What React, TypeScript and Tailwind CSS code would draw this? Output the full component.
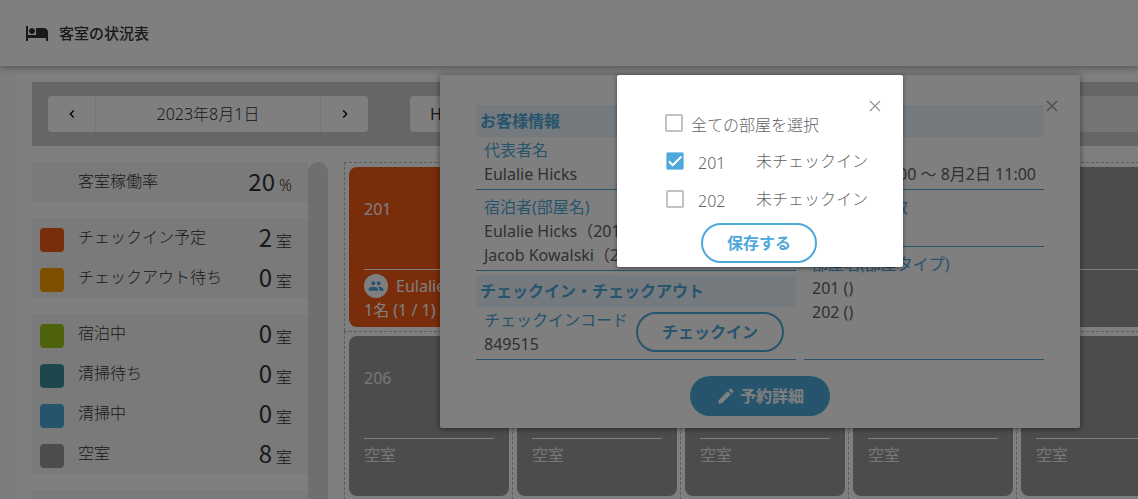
import { useState } from "react";
import {
  MdCheck,
  MdChevronLeft,
  MdChevronRight,
  MdEdit,
  MdHotel,
  MdPeople,
} from "react-icons/md";

type Stat = {
  label: string;
  value: number;
  unit: string;
  color?: string;
};

type Room = {
  no: string;
  guest?: string;
  people?: string;
};

const statGroups: Stat[][] = [
  [{ label: "客室稼働率", value: 20, unit: "%" }],
  [
    { label: "チェックイン予定", value: 2, unit: "室", color: "bg-[#f25a17]" },
    { label: "チェックアウト待ち", value: 0, unit: "室", color: "bg-[#ff9f00]" },
  ],
  [
    { label: "宿泊中", value: 0, unit: "室", color: "bg-[#9ac514]" },
    { label: "清掃待ち", value: 0, unit: "室", color: "bg-[#3c8c9b]" },
    { label: "清掃中", value: 0, unit: "室", color: "bg-[#4fa8db]" },
    { label: "空室", value: 8, unit: "室", color: "bg-[#999999]" },
  ],
];

const rooms: Room[] = [
  { no: "201", guest: "Eulalie Hicks", people: "1名 (1 / 1)" },
  { no: "202", guest: "Jacob Kowalski", people: "1名 (1 / 1)" },
  { no: "203" },
  { no: "204" },
  { no: "205" },
  { no: "206" },
  { no: "207" },
  { no: "208" },
  { no: "209" },
  { no: "210" },
];

function StatRow({ stat }: { stat: Stat }) {
  return (
    <div className="flex h-10 items-center pr-4 pb-0.5 pl-2">
      <span className={`mt-1.5 size-6 shrink-0 rounded ${stat.color ?? ""}`} />
      <span className="ml-[14px] flex-1">{stat.label}</span>
      <span>
        <span className="font-['Noto_Sans_CJK_JP',sans-serif] text-2xl leading-9 font-normal">
          {stat.value}
        </span>
        <span className="ml-1">{stat.unit}</span>
      </span>
    </div>
  );
}

function RoomCard({ room }: { room: Room }) {
  return (
    <div className="border-t border-l border-dashed border-[#b8b8b8] py-1 pr-[3px] pl-1">
      <div
        className={`h-40 overflow-hidden rounded-lg px-[15px] pt-[30px] ${
          room.guest ? "bg-[#f25a17] text-white" : "bg-[#999999] text-[#eeeeee]"
        }`}
      >
        <div>{room.no}</div>
        <div className="mt-12 border-t border-white pt-1 whitespace-nowrap">
          {room.guest ? (
            <>
              <div className="flex items-center gap-2">
                <span className="flex size-6 shrink-0 items-center justify-center rounded-full bg-white text-[#4fa8db]">
                  <MdPeople className="size-4" />
                </span>
                {room.guest}
              </div>
              <div>{room.people}</div>
            </>
          ) : (
            <div>空室</div>
          )}
        </div>
      </div>
    </div>
  );
}

function SectionTitle({ children }: { children: string }) {
  return (
    <h2 className="bg-[#e8f4fa] px-1 leading-8 font-bold text-[#4fa8db]">
      {children}
    </h2>
  );
}

function InfoItem({
  title,
  lines,
  className = "",
  action,
}: {
  title: string;
  lines: string[];
  className?: string;
  action?: React.ReactNode;
}) {
  return (
    <div
      className={`flex justify-between border-b border-[#4fa8db] px-2 pt-px pb-[3px] whitespace-nowrap ${className}`}
    >
      <dl className="flex-1">
        <dt className="text-left text-[#4fa8db]">{title}</dt>
        {lines.map((line, i) => (
          <dd key={i} className="min-h-6">
            {line}
          </dd>
        ))}
      </dl>
      {action}
    </div>
  );
}

function CloseButton({ className }: { className: string }) {
  return (
    <button aria-label="閉じる" className={`absolute top-[25px] ${className}`}>
      <svg viewBox="0 0 12 12" className="size-3 stroke-[#909399]" fill="none">
        <path d="M1 1l10 10M11 1L1 11" strokeWidth="1.2" />
      </svg>
    </button>
  );
}

function CheckBox({
  id,
  checked,
  onChange,
}: {
  id: string;
  checked: boolean;
  onChange: () => void;
}) {
  return (
    <span className="relative flex shrink-0">
      <input
        id={id}
        type="checkbox"
        checked={checked}
        onChange={onChange}
        className="size-[18px] appearance-none rounded-xs border-2 border-[#c2c2c2] checked:border-[#4fa8db] checked:bg-[#4fa8db]"
      />
      {checked && (
        <MdCheck
          className="pointer-events-none absolute inset-0 size-[18px] text-white"
          strokeWidth="1"
        />
      )}
    </span>
  );
}

export default function App() {
  const [selected, setSelected] = useState<string[]>(["201"]);
  const targets = ["201", "202"];
  const all = selected.length === targets.length;

  const toggle = (no: string) => {
    setSelected((prev) =>
      prev.includes(no) ? prev.filter((n) => n !== no) : [...prev, no]
    );
  };

  return (
    <div className="relative h-screen overflow-hidden bg-[#f8f8f8] font-['Noto_Sans','Noto_Sans_CJK_JP',sans-serif] text-base leading-6 font-light text-[#333333]">
      <header className="relative flex h-[66px] items-center gap-[10px] bg-white pl-[25px] shadow-[0_2px_6px_rgba(0,0,0,0.3)]">
        <MdHotel className="size-6" />
        <h1 className="text-[15px] font-medium">客室の状況表</h1>
      </header>

      <main className="mt-2 ml-4 bg-white pt-2 pl-4">
        <div className="flex h-16 items-center bg-[#cccccc] pl-4">
          <div className="flex h-9 w-80 rounded bg-white">
            <button
              aria-label="前の日"
              className="flex w-12 items-center justify-center border-r border-[#eeeeee] text-black"
            >
              <MdChevronLeft className="size-4" />
            </button>
            <button className="flex-1">2023年8月1日</button>
            <button
              aria-label="次の日"
              className="flex w-12 items-center justify-center border-l border-[#eeeeee] text-black"
            >
              <MdChevronRight className="size-4" />
            </button>
          </div>
          <button className="ml-[42px] h-9 w-80 rounded bg-white px-5 text-left font-normal">
            HOTEL
          </button>
          <button aria-label="更新" className="ml-4 h-9 flex-1 bg-[#e8eaed]" />
        </div>

        <div className="mt-4 flex gap-4">
          <aside className="flex shrink-0">
            <div className="flex w-[276px] flex-col gap-4">
              {statGroups.map((group, i) => (
                <div key={i} className="bg-[#f5f5f5]">
                  {group.map((stat) => (
                    <StatRow key={stat.label} stat={stat} />
                  ))}
                </div>
              ))}
              <div className="h-10 bg-[#f5f5f5]" />
            </div>
            <div className="w-5 rounded-full bg-[#dedede]" />
          </aside>
          <section className="grid min-w-0 flex-1 grid-cols-[repeat(5,168px)] content-start font-normal">
            {rooms.map((room) => (
              <RoomCard key={room.no} room={room} />
            ))}
          </section>
        </div>
      </main>

      {/* 予約情報ダイアログ */}
      <div className="absolute top-[75px] left-[440px] w-[640px] rounded-xs bg-white px-9 pt-[30px] pb-3 font-normal text-[#606266] shadow-[0_1px_6px_rgba(0,0,0,0.5)]">
        <CloseButton className="right-[22px]" />
        <div className="flex gap-2">
          <div className="flex w-80 flex-col">
            <SectionTitle>お客様情報</SectionTitle>
            <InfoItem title="代表者名" lines={["Eulalie Hicks"]} className="mb-1" />
            <InfoItem
              title="宿泊者(部屋名)"
              lines={["Eulalie Hicks（201）", "Jacob Kowalski（202）"]}
              className="mb-1"
            />
            <SectionTitle>チェックイン・チェックアウト</SectionTitle>
            <InfoItem
              title="チェックインコード"
              lines={["849515"]}
              action={
                <button className="mr-1 h-10 self-center rounded-full border-2 border-[#4fa8db] px-6 font-bold text-[#4fa8db]">
                  チェックイン
                </button>
              }
            />
          </div>
          <div className="flex flex-1 flex-col">
            <SectionTitle>ご宿泊情報</SectionTitle>
            <InfoItem
              title="宿泊期間"
              lines={["8月1日 15:00 〜 8月2日 11:00"]}
              className="mb-1 text-right"
            />
            <InfoItem title="予約部屋総数" lines={["2室"]} className="mb-1" />
            <InfoItem
              title="部屋名(部屋タイプ)"
              lines={["201 ()", "202 ()"]}
              className="flex-1"
            />
          </div>
        </div>
        <button className="mx-auto mt-4 flex h-10 w-[140px] items-center justify-center gap-1 rounded-full bg-[#4fa8db] font-bold text-white">
          <MdEdit className="size-5" />
          予約詳細
        </button>
      </div>

      <div className="absolute inset-0 bg-black/50" />

      {/* 部屋選択ダイアログ */}
      <div className="absolute top-[75px] left-[617px] w-[286px] rounded-xs bg-white pt-9 pb-1 pl-12 text-[#606266] shadow-[0_1px_4px_rgba(0,0,0,0.5)]">
        <CloseButton className="right-[22px]" />
        <div className="flex h-6 items-center gap-2">
          <CheckBox
            id="all"
            checked={all}
            onChange={() => setSelected(all ? [] : targets)}
          />
          <label htmlFor="all" className="pt-1">
            全ての部屋を選択
          </label>
        </div>
        <ul className="mt-[7px]">
          {targets.map((no) => (
            <li key={no} className="flex h-[38px] items-center pl-px">
              <CheckBox
                id={`room-${no}`}
                checked={selected.includes(no)}
                onChange={() => toggle(no)}
              />
              <label htmlFor={`room-${no}`} className="ml-[14px] w-[58px] pt-1">
                {no}
              </label>
              <span>未チェックイン</span>
            </li>
          ))}
        </ul>
        <button className="ml-9 mt-[5px] block h-10 rounded-full border-2 border-[#4fa8db] px-6 font-bold text-[#4fa8db]">
          保存する
        </button>
      </div>
    </div>
  );
}
